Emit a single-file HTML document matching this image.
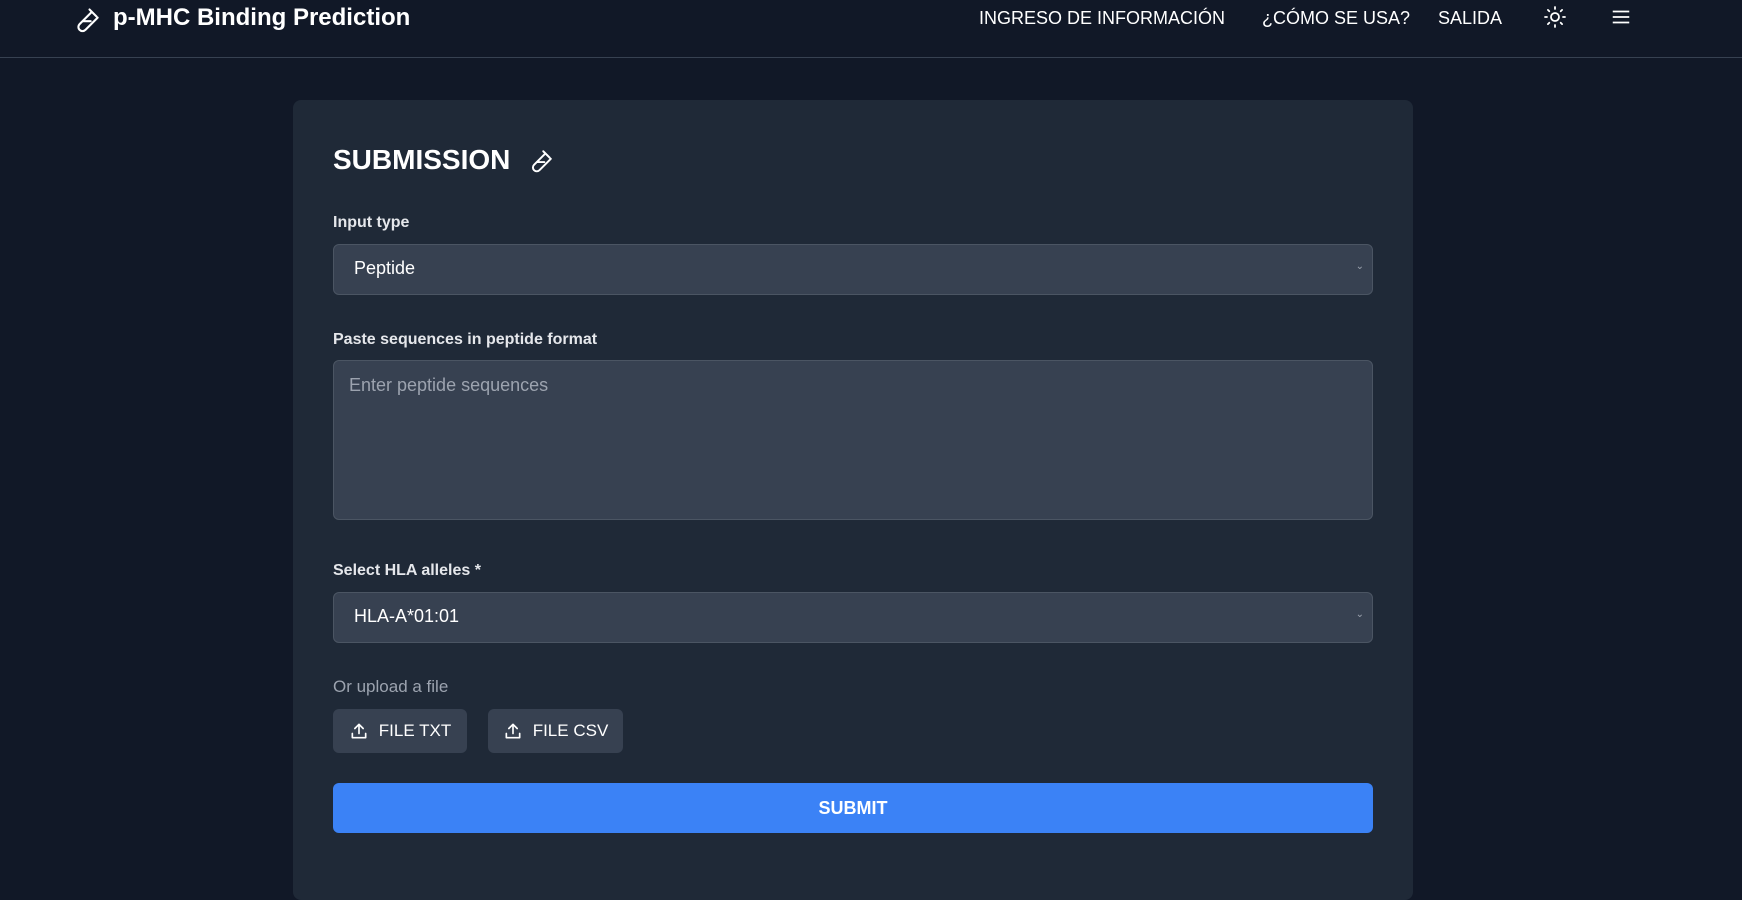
<!DOCTYPE html>
<html><head><meta charset="utf-8"><style>
*{box-sizing:border-box;margin:0;padding:0}
body{width:1742px;height:857px;overflow:hidden;background:#111827;font-family:"Liberation Sans",sans-serif;color:#fff}
.hdr{position:absolute;left:0;top:0;width:1742px;height:58px;border-bottom:1px solid #374151}
.t{position:absolute;white-space:nowrap}
.card{position:absolute;left:293px;top:100px;width:1120px;height:800px;background:#1f2937;border-radius:8px}
.lbl{position:absolute;left:40px;font-size:16px;font-weight:bold;color:#e5e7eb}
.fld{position:absolute;left:40px;width:1040px;background:#374151;border:1px solid #4b5563;border-radius:6px;font-size:18px}
.btn{position:absolute;top:609px;height:44px;background:#374151;border-radius:6px;font-size:17px;display:flex;align-items:center;justify-content:center;gap:10px}
</style></head><body>
<div class="hdr">
<svg class="t" style="left:72px;top:6px" width="28" height="28" viewBox="0 0 24 24" fill="none" stroke="#fff" stroke-width="1.8" stroke-linecap="round" stroke-linejoin="round"><path d="M15 3l6 6M17 5L6.5 15.5a3.5 3.5 0 0 0 5 5L22 10M9 13h7"/></svg>
<div class="t" style="left:113px;top:4px;font-size:24px;font-weight:bold">p-MHC Binding Prediction</div>
<div class="t" style="left:979px;top:8px;font-size:18px">INGRESO DE INFORMACIÓN</div>
<div class="t" style="left:1262px;top:8px;font-size:18px">¿CÓMO SE USA?</div>
<div class="t" style="left:1438px;top:8px;font-size:18px">SALIDA</div>
<svg class="t" style="left:1543px;top:5px" width="24" height="24" viewBox="0 0 24 24" fill="none" stroke="#fff" stroke-width="1.8" stroke-linecap="round"><circle cx="12" cy="12" r="4"/><path d="M12 2v2M12 20v2M2 12h2M20 12h2M4.9 4.9l1.4 1.4M17.7 17.7l1.4 1.4M4.9 19.1l1.4-1.4M17.7 6.3l1.4-1.4"/></svg>
<svg class="t" style="left:1610px;top:6px" width="22" height="22" viewBox="0 0 24 24" fill="none" stroke="#fff" stroke-width="2"><path d="M3 6h18M3 12h18M3 18h18"/></svg>
</div>
<div class="card">
<div class="t" style="left:40px;top:44px;font-size:28px;font-weight:bold">SUBMISSION</div>
<svg class="t" style="left:234px;top:48px" width="26" height="26" viewBox="0 0 24 24" fill="none" stroke="#fff" stroke-width="1.8" stroke-linecap="round" stroke-linejoin="round"><path d="M15 3l6 6M17 5L6.5 15.5a3.5 3.5 0 0 0 5 5L22 10M9 13h7"/></svg>
<div class="lbl" style="top:114px">Input type</div>
<div class="fld" style="top:144px;height:51px;padding:13px 20px">Peptide<span style="position:absolute;right:8px;top:16px;font-size:10px;color:#9ca3af">⌄</span></div>
<div class="lbl" style="top:231px">Paste sequences in peptide format</div>
<div class="fld" style="top:260px;height:160px;padding:14px 15px;color:#9ca3af">Enter peptide sequences</div>
<div class="lbl" style="top:462px">Select HLA alleles *</div>
<div class="fld" style="top:492px;height:51px;padding:13px 20px">HLA-A*01:01<span style="position:absolute;right:8px;top:16px;font-size:10px;color:#9ca3af">⌄</span></div>
<div class="t" style="left:40px;top:577px;font-size:17px;color:#9ca3af">Or upload a file</div>
<div class="btn" style="left:40px;width:134px"><svg width="20" height="20" viewBox="0 0 24 24" fill="none" stroke="#fff" stroke-width="2" stroke-linecap="round" stroke-linejoin="round"><path d="M4 15v5h16v-5M12 15V4M7 9l5-5 5 5"/></svg>FILE TXT</div>
<div class="btn" style="left:195px;width:135px"><svg width="20" height="20" viewBox="0 0 24 24" fill="none" stroke="#fff" stroke-width="2" stroke-linecap="round" stroke-linejoin="round"><path d="M4 15v5h16v-5M12 15V4M7 9l5-5 5 5"/></svg>FILE CSV</div>
<div class="t" style="left:40px;top:683px;width:1040px;height:50px;background:#3b82f6;border-radius:6px;font-size:18px;font-weight:bold;text-align:center;line-height:50px">SUBMIT</div>
</div>
</body></html>
